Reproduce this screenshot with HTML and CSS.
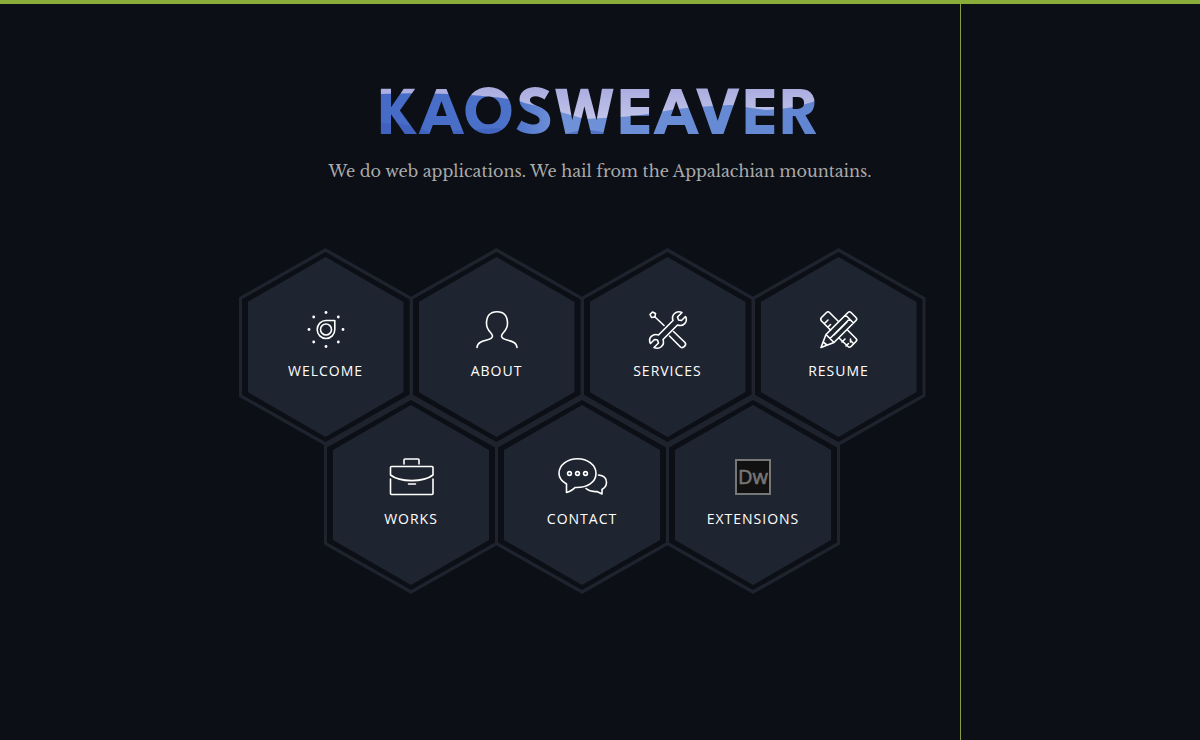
FILE: index.html
```html
<!DOCTYPE html>
<html lang="en">
<head>
    <meta charset="UTF-8">
    <meta name="viewport" content="width=device-width, initial-scale=1.0">
    <title>Kaosweaver</title>
    <link rel="stylesheet" href="styles.css">
</head>
<body>
    <main>
        <header>
            <h1>KAOSWEAVER</h1>
            <p class="tagline">We do web applications. We hail from the Appalachian mountains.</p>
        </header>

        <nav class="honeycomb">
            <div class="hex-row">
                <a class="hex" href="#welcome">
                    <span class="hex-content">
                        <svg class="icon" viewBox="0 0 60 60">
                            <path d="M30 20.500H38.800V29.500A8.800 9 0 1 1 30 20.500Z"/>
                            <circle cx="30" cy="29.500" r="5.500"/>
                            <g class="solid">
                                <circle cx="30" cy="12.500" r="1.400"/>
                                <circle cx="42.300" cy="17" r="1.400"/>
                                <circle cx="47" cy="29.500" r="1.400"/>
                                <circle cx="42.300" cy="42" r="1.400"/>
                                <circle cx="30" cy="46.500" r="1.400"/>
                                <circle cx="17.700" cy="42" r="1.400"/>
                                <circle cx="13" cy="29.500" r="1.400"/>
                                <circle cx="17.700" cy="17" r="1.400"/>
                            </g>
                        </svg>
                        <span class="label">WELCOME</span>
                    </span>
                </a>
                <a class="hex" href="#about">
                    <span class="hex-content">
                        <svg class="icon" viewBox="0 0 60 60">
                            <path d="M10 47.500C10.500 38.500 25.500 42 25.500 36C25.500 33 19.500 31 19.500 23.500C19.500 16 23 11.700 30 11.700S40.500 16 40.500 23.500C40.500 31 34.500 33 34.500 36C34.500 42 49.500 38.500 50 47.500"/>
                        </svg>
                        <span class="label">ABOUT</span>
                    </span>
                </a>
                <a class="hex" href="#services">
                    <span class="hex-content">
                        <svg class="icon" viewBox="0 0 60 60">
                            <path d="M35 20.500C33 15 38 10 44 12.500L39.500 17L40.500 20L43.500 20.500L47.500 16.500C50.500 22 45 27 39.500 25L25 39.500C27 45 22 50 16 47.500L20.500 43L19.500 40L16.500 39.500L12.500 43.500C9.500 38 15 33 20.500 35Z"/>
                            <path d="M16.500 16.500L26 25.500M12 14.500L14.500 12L17.500 13.500L17 17L13.500 17.500ZM35.500 31.500L47 42.500C49 45 45 49 42.500 47L31.500 36"/>
                        </svg>
                        <span class="label">SERVICES</span>
                    </span>
                </a>
                <a class="hex" href="#resume">
                    <span class="hex-content">
                        <svg class="icon" viewBox="0 0 60 60">
                            <path d="M17 34.500L39 12.500Q40.500 11 42 12.500L47 17.500Q48.500 19 47 20.500L25 42.500L12 47.500ZM17 34.500L19 36.500L21 38.500L25 42.500M21 38.500L40.500 19M36.500 15L44.500 23M25 35L38 22M14 42L18 45"/>
                            <path d="M21.500 30L12.500 21Q11 19 12.500 17.500L17.500 12.500Q19 11 20.500 12.500L29 21M38.500 30L47 38.500Q48.500 40 47 41.500L42 46.500Q40.500 48 39 46.500L30 38M15.500 23.500L19 20M19 27L21.500 24.500M33 42L36 39M37 46L39.500 43.500M41.500 42L41.500 39M44.500 43.500L42 41"/>
                        </svg>
                        <span class="label">RESUME</span>
                    </span>
                </a>
            </div>

            <div class="hex-row">
                <a class="hex" href="#works">
                    <span class="hex-content">
                        <svg class="icon" viewBox="0 0 60 60">
                            <path d="M23 16V12Q23 11 24 11H37Q38 11 38 12V16M9.500 27V19.500Q9.500 18.500 10.500 18.500H51Q52 18.500 52 19.500V27C42.500 34.500 19 34.500 9.500 27ZM9.500 31V45.500Q9.500 46.500 10.500 46.500H51Q52 46.500 52 45.500V31M27.500 36H34.500"/>
                        </svg>
                        <span class="label">WORKS</span>
                    </span>
                </a>
                <a class="hex" href="#contact">
                    <span class="hex-content">
                        <svg class="icon" viewBox="0 0 60 60">
                            <path d="M14.500 44.500V36C9.500 33 7 29.500 7 25.500C7 17 15.500 10.800 25.500 10.800S44 17 44 25.500S35.500 40 23 39.500Q20.500 42.500 14.500 44.500ZM46.500 27C51.500 27.500 54.500 30.500 54.500 34.500C54.500 37.500 52.500 40 50 41.500V46L45 43.500C40.500 44 37 43 34 40.500"/>
                            <circle cx="17.500" cy="25.500" r="1.900"/>
                            <circle cx="25.500" cy="25.500" r="1.900"/>
                            <circle cx="33.500" cy="25.500" r="1.900"/>
                        </svg>
                        <span class="label">CONTACT</span>
                    </span>
                </a>
                <a class="hex" href="#extensions">
                    <span class="hex-content">
                        <svg class="icon dw" viewBox="0 0 60 60">
                            <rect x="13" y="12" width="34" height="34"/>
                            <text x="30" y="36">Dw</text>
                        </svg>
                        <span class="label">EXTENSIONS</span>
                    </span>
                </a>
            </div>
        </nav>
    </main>

    <aside class="panel"></aside>
</body>
</html>
```

FILE: styles.css
```css
* {
    box-sizing: border-box;
}
body {
    margin: 0;
    min-height: 100vh;
    background: #0c0f16;
    border-top: 4px solid #8aac38;
    color: #ffffff;
    font-family: 'Open Sans', sans-serif;
}
header {
    padding-top: 76px;
    text-align: center;
}
h1 {
    width: fit-content;
    margin: 0 auto;
    font-family: 'League Spartan', 'Lato', sans-serif;
    font-size: 68px;
    font-weight: 700;
    line-height: 76px;
    letter-spacing: 1px;
    color: transparent;
    background: #b4b7e2 url("data:image/svg+xml,%3Csvg xmlns='http://www.w3.org/2000/svg' viewBox='0 8 440 76' preserveAspectRatio='none'%3E%3Cdefs%3E%3ClinearGradient id='a'%3E%3Cstop stop-color='%23456bc7'/%3E%3Cstop offset='.3' stop-color='%234c72ca'/%3E%3Cstop offset='.4' stop-color='%236f92d8'/%3E%3Cstop offset='1' stop-color='%236285d2'/%3E%3C/linearGradient%3E%3ClinearGradient id='b' x2='0' y2='1'%3E%3Cstop offset='.2' stop-color='%23abade0'/%3E%3Cstop offset='.6' stop-color='%23c3c6ea'/%3E%3C/linearGradient%3E%3C/defs%3E%3Cpath fill='url(%23b)' d='M0 0H440V84H0Z'/%3E%3Cpath fill='url(%23a)' d='M0 22Q45 20 90 23T145 31Q175 38 205 47L240 45Q265 43 285 39T350 33L385 38Q415 37 440 27V84H0Z'/%3E%3Cpath fill='%233c59b5' d='M0 51Q30 50 50 60L120 56L135 62V84H0ZM185 62L205 57L235 62V84H185Z' opacity='.55'/%3E%3C/svg%3E") 0 0 / 100% 100%;
    -webkit-background-clip: text;
    background-clip: text;
}
.tagline {
    margin: 0;
    color: #aaaaaa;
    font-family: 'Libre Baskerville', 'Liberation Serif', serif;
    font-size: 16px;
    line-height: 30px;
}
.honeycomb {
    padding: 62px 36px 40px 0;
}
.hex-row {
    display: flex;
    justify-content: center;
}
.hex-row + .hex-row {
    margin-top: -50px;
}
.hex {
    display: grid;
    flex: none;
    width: 174px;
    height: 198px;
    background: #1e232e;
    color: #ffffff;
    text-decoration: none;
}
.hex + .hex {
    margin-left: -3px;
}
.hex,
.hex::before,
.hex-content {
    clip-path: polygon(50% 0, 100% 25%, 100% 75%, 50% 100%, 0 75%, 0 25%);
}
.hex::before,
.hex-content {
    grid-area: 1 / 1;
}
.hex::before {
    content: "";
    margin: 4px 3px;
    background: #0c0f16;
}
.hex-content {
    display: flex;
    flex-direction: column;
    align-items: center;
    margin: 9px;
    padding-top: 43px;
    background: #1f2530;
}
.hex:hover .hex-content {
    background: #2a3241;
}
.icon {
    width: 60px;
    height: 60px;
    fill: none;
    stroke: #ffffff;
    stroke-width: 1.6;
    stroke-linejoin: round;
    stroke-linecap: round;
}
.solid {
    fill: #ffffff;
    stroke: none;
}
.dw rect {
    fill: #111111;
    stroke: #777777;
    stroke-width: 2;
    stroke-linejoin: miter;
}
.dw text {
    fill: #777777;
    stroke: #777777;
    stroke-width: 0.6;
    font-family: 'Open Sans', sans-serif;
    font-size: 20px;
    text-anchor: middle;
}
.label {
    margin-top: 1px;
    font-size: 14px;
    line-height: 20px;
    letter-spacing: 1px;
}
.panel {
    position: fixed;
    top: 4px;
    right: 0;
    bottom: 0;
    width: 20%;
    border-left: 1px solid #8a9c48;
}
```
